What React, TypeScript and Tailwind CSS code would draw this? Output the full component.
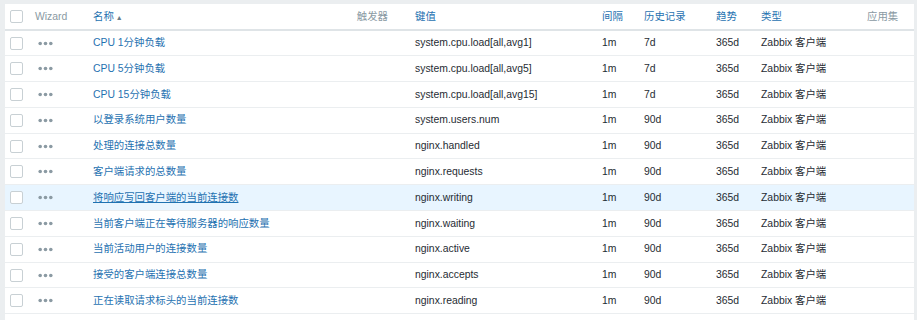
import React from "react"

type Item = {
  name: string
  key: string
  delay: string
  history: string
  trends: string
}

const items: Item[] = [
  { name: "CPU 1分钟负载", key: "system.cpu.load[all,avg1]", delay: "1m", history: "7d", trends: "365d" },
  { name: "CPU 5分钟负载", key: "system.cpu.load[all,avg5]", delay: "1m", history: "7d", trends: "365d" },
  { name: "CPU 15分钟负载", key: "system.cpu.load[all,avg15]", delay: "1m", history: "7d", trends: "365d" },
  { name: "以登录系统用户数量", key: "system.users.num", delay: "1m", history: "90d", trends: "365d" },
  { name: "处理的连接总数量", key: "nginx.handled", delay: "1m", history: "90d", trends: "365d" },
  { name: "客户端请求的总数量", key: "nginx.requests", delay: "1m", history: "90d", trends: "365d" },
  { name: "将响应写回客户端的当前连接数", key: "nginx.writing", delay: "1m", history: "90d", trends: "365d" },
  { name: "当前客户端正在等待服务器的响应数量", key: "nginx.waiting", delay: "1m", history: "90d", trends: "365d" },
  { name: "当前活动用户的连接数量", key: "nginx.active", delay: "1m", history: "90d", trends: "365d" },
  { name: "接受的客户端连接总数量", key: "nginx.accepts", delay: "1m", history: "90d", trends: "365d" },
  { name: "正在读取请求标头的当前连接数", key: "nginx.reading", delay: "1m", history: "90d", trends: "365d" },
]

function Box() {
  return <span className="block h-[13px] w-[13px] rounded-[2px] border border-[#c8d0d4] bg-white" />
}

function Dots() {
  return (
    <svg width="15" height="5" viewBox="0 0 15 5" className="block">
      <circle cx="2.2" cy="2.5" r="1.8" fill="#8b9aa3" />
      <circle cx="7.5" cy="2.5" r="1.8" fill="#8b9aa3" />
      <circle cx="12.8" cy="2.5" r="1.8" fill="#8b9aa3" />
    </svg>
  )
}

export default function App() {
  return (
    <div className="h-[320px] w-[917px] overflow-hidden bg-[#ebeef0] pl-[5px] pr-[3px] pt-[4px] font-['Liberation_Sans','Noto_Sans_CJK_SC',sans-serif] text-[10.4px] text-[#1f2c33]">
      <div className="h-[330px] bg-white">
        <table className="w-full table-fixed border-collapse">
          <colgroup>
            <col className="w-[25px]" />
            <col className="w-[58px]" />
            <col className="w-[210px]" />
            <col className="w-[112px]" />
            <col className="w-[187px]" />
            <col className="w-[42px]" />
            <col className="w-[72px]" />
            <col className="w-[45px]" />
            <col className="w-[106px]" />
            <col />
          </colgroup>
          <thead>
            <tr className="h-[26px] border-b-2 border-[#dfe4e7] text-left">
              <th className="pl-[5px] font-normal">
                <Box />
              </th>
              <th className="pl-[5px] font-normal text-[#8a9aa3]">Wizard</th>
              <th className="pl-[5px] font-normal text-[#1f72b1]">
                名称<span className="ml-[2px] text-[7px] text-[#6b7c86]">▲</span>
              </th>
              <th className="pr-[22px] text-right font-normal text-[#8a9aa3]">触发器</th>
              <th className="pl-[5px] font-normal text-[#1f72b1]">键值</th>
              <th className="pl-[5px] font-normal text-[#1f72b1]">间隔</th>
              <th className="pl-[5px] font-normal text-[#1f72b1]">历史记录</th>
              <th className="pl-[5px] font-normal text-[#1f72b1]">趋势</th>
              <th className="pl-[5px] font-normal text-[#1f72b1]">类型</th>
              <th className="pl-[5px] font-normal text-[#8a9aa3]">应用集</th>
            </tr>
          </thead>
          <tbody>
            {items.map((it, i) => {
              const hover = i === 6
              return (
                <tr key={it.key} className={`h-[25.8px] border-b border-[#ebeef0] ${hover ? "bg-[#e8f5ff]" : ""}`}>
                  <td className="pl-[5px]">
                    <Box />
                  </td>
                  <td className="pl-[8px]">
                    <Dots />
                  </td>
                  <td className="whitespace-nowrap pl-[5px]">
                    <a href="#" className={`text-[#1f72b1] ${hover ? "underline" : ""}`}>
                      {it.name}
                    </a>
                  </td>
                  <td />
                  <td className="whitespace-nowrap pl-[5px]">{it.key}</td>
                  <td className="pl-[5px]">{it.delay}</td>
                  <td className="pl-[5px]">{it.history}</td>
                  <td className="pl-[5px]">{it.trends}</td>
                  <td className="whitespace-nowrap pl-[5px]">Zabbix 客户端</td>
                  <td />
                </tr>
              )
            })}
          </tbody>
        </table>
      </div>
    </div>
  )
}
